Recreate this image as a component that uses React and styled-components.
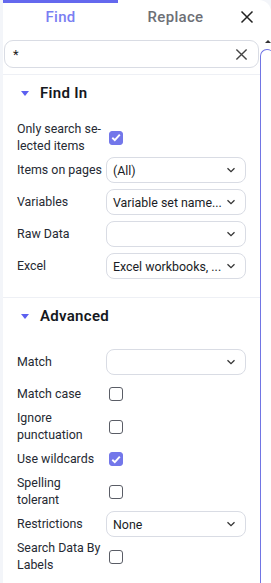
import React from "react"
import styled, { createGlobalStyle } from "styled-components"

const Global = createGlobalStyle`
  html, body {
    margin: 0;
    padding: 0;
    background: #f3f5f9;
    font-family: Roboto, "Noto Sans", sans-serif;
    color: #1f2330;
  }
`

const Chevron = () => (
  <svg width="10" height="6" viewBox="0 0 10 6">
    <path d="M1.5 1.2 L5 4.6 L8.5 1.2" fill="none" stroke="#333" strokeWidth="1.3" />
  </svg>
)

const Cross = ({ size = 14, color = "#333" }) => (
  <svg width={size} height={size} viewBox="0 0 14 14">
    <path d="M1.5 1.5 L12.5 12.5 M12.5 1.5 L1.5 12.5" stroke={color} strokeWidth="1.5" />
  </svg>
)

const Check = () => (
  <svg width="10" height="9" viewBox="0 0 10 9">
    <path d="M1.3 4.8 L3.8 7.2 L8.8 1.6" fill="none" stroke="#fff" strokeWidth="1.9" />
  </svg>
)

const Dropdown = ({ value }) => (
  <Select>
    <SelectText>{value}</SelectText>
    <Chevron />
  </Select>
)

export default function App() {
  return (
    <>
      <Global />
      <Panel>
        <Tabs>
          <Tab active>Find</Tab>
          <Tab>Replace</Tab>
          <CloseBtn>
            <Cross size={14} color="#222" />
          </CloseBtn>
        </Tabs>
        <Body>
          <Content>
            <SearchBox>
              <span>*</span>
              <Cross size={13} color="#444" />
            </SearchBox>
            <Divider />
            <Section>
              <SectionHead>
                <Caret />
                Find In
              </SectionHead>
              <Rows>
                <Row>
                  <Label>Only search se-<br />lected items</Label>
                  <Box checked><Check /></Box>
                </Row>
                <Row>
                  <Label>Items on pages</Label>
                  <Dropdown value="(All)" />
                </Row>
                <Row>
                  <Label>Variables</Label>
                  <Dropdown value="Variable set name..." />
                </Row>
                <Row>
                  <Label>Raw Data</Label>
                  <Dropdown value="" />
                </Row>
                <Row>
                  <Label>Excel</Label>
                  <Dropdown value="Excel workbooks, ..." />
                </Row>
              </Rows>
            </Section>
            <Divider />
            <Section>
              <SectionHead>
                <Caret />
                Advanced
              </SectionHead>
              <Rows spaced>
                <Row>
                  <Label>Match</Label>
                  <Dropdown value="" />
                </Row>
                <Row>
                  <Label>Match case</Label>
                  <Box />
                </Row>
                <Row>
                  <Label>Ignore<br />punctuation</Label>
                  <Box />
                </Row>
                <Row>
                  <Label>Use wildcards</Label>
                  <Box checked><Check /></Box>
                </Row>
                <Row>
                  <Label>Spelling<br />tolerant</Label>
                  <Box />
                </Row>
                <Row>
                  <Label>Restrictions</Label>
                  <Dropdown value="None" />
                </Row>
                <Row>
                  <Label>Search Data By<br />Labels</Label>
                  <Box />
                </Row>
              </Rows>
            </Section>
          </Content>
          <ScrollTrack>
            <UpArrow />
            <Thumb />
          </ScrollTrack>
        </Body>
      </Panel>
    </>
  )
}

const Panel = styled.div`
  margin-left: 3px;
  height: 583px;
  background: #fff;
  border-top-right-radius: 12px;
  display: flex;
  flex-direction: column;
  overflow: hidden;
`

const Tabs = styled.div`
  display: flex;
  align-items: center;
  height: 37px;
  flex-shrink: 0;
`

const Tab = styled.div`
  width: 115px;
  height: 100%;
  box-sizing: border-box;
  display: flex;
  align-items: center;
  justify-content: center;
  font-size: 15px;
  font-weight: 500;
  letter-spacing: 0.3px;
  padding-bottom: 6px;
  color: ${(p) => (p.active ? "#7a7ef2" : "#6d6f76")};
  border-top: 3px solid ${(p) => (p.active ? "#6468ee" : "transparent")};
`

const CloseBtn = styled.div`
  margin-left: auto;
  margin-right: 17px;
  display: flex;
  padding-bottom: 4px;
`

const Body = styled.div`
  display: flex;
  flex: 1;
  min-height: 0;
`

const Content = styled.div`
  width: 257px;
  flex-shrink: 0;
  display: flex;
  flex-direction: column;
  overflow: hidden;
  & > * {
    flex-shrink: 0;
  }
`

const SearchBox = styled.div`
  margin: 3px 1px 0 1px;
  height: 26px;
  border: 1px solid #d9dce4;
  border-radius: 9px;
  display: flex;
  align-items: center;
  justify-content: space-between;
  padding: 0 10px 0 8px;
  font-size: 13px;
  color: #222;
`

const Divider = styled.div`
  height: 1px;
  background: #eef0f5;
  margin-top: 6px;
`

const Section = styled.div`
  display: flex;
  flex-direction: column;
  padding: 8px 0 0 14px;
`

const SectionHead = styled.div`
  display: flex;
  align-items: center;
  gap: 11px;
  font-size: 15px;
  font-weight: 600;
  letter-spacing: 0.3px;
  height: 20px;
  padding-left: 4px;
  color: #151821;
`

const Caret = styled.span`
  width: 0;
  height: 0;
  border-left: 4.5px solid transparent;
  border-right: 4.5px solid transparent;
  border-top: 5px solid #5c60f0;
`

const Rows = styled.div`
  display: flex;
  flex-direction: column;
  margin-top: ${(p) => (p.spaced ? "20px" : "18px")};
  padding-bottom: 9px;
`

const Row = styled.div`
  display: flex;
  align-items: center;
  min-height: 32px;
`

const Label = styled.div`
  width: 89px;
  flex-shrink: 0;
  font-size: 12.4px;
  line-height: 16.5px;
  color: #262a33;
`

const Select = styled.div`
  width: 140px;
  height: 26px;
  box-sizing: border-box;
  border: 1px solid #d9dce4;
  border-radius: 8px;
  display: flex;
  align-items: center;
  gap: 6px;
  padding: 0 9px 0 6px;
`

const SelectText = styled.span`
  flex: 1;
  min-width: 0;
  white-space: nowrap;
  font-size: 12.4px;
  color: #1a1d26;
`

const Box = styled.div`
  width: 12px;
  height: 12px;
  margin-left: 3px;
  border-radius: 3px;
  border: 1px solid ${(p) => (p.checked ? "#7377ea" : "#5a5d66")};
  background: ${(p) => (p.checked ? "#7377ea" : "#fff")};
  display: flex;
  align-items: center;
  justify-content: center;
`

const ScrollTrack = styled.div`
  flex: 1;
  display: flex;
  flex-direction: column;
  align-items: flex-start;
`

const UpArrow = styled.span`
  width: 0;
  height: 0;
  margin: 3px 0 0 5px;
  border-left: 3px solid transparent;
  border-right: 3px solid transparent;
  border-bottom: 3px solid #333;
`

const Thumb = styled.div`
  margin-top: 6px;
  flex: 1;
  width: 14px;
  box-sizing: border-box;
  border: 1.5px solid #7175e4;
  border-right: none;
  border-bottom: none;
  border-top-left-radius: 7px;
  border-top-right-radius: 7px;
`
